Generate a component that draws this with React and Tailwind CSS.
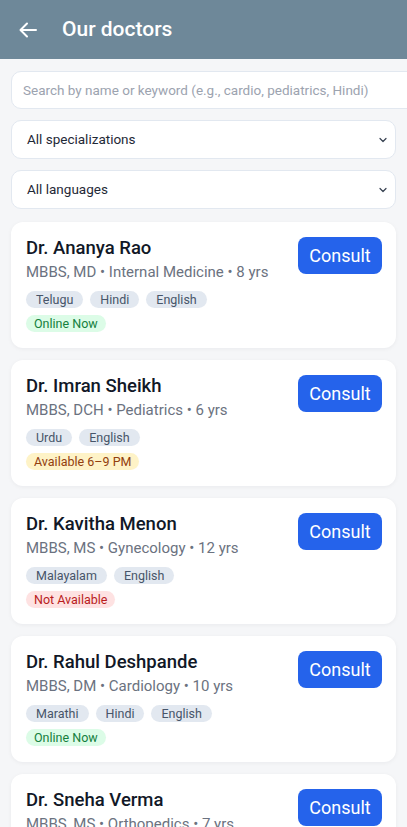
import React from 'react';

const doctors = [
  { name: 'Dr. Ananya Rao', info: 'MBBS, MD • Internal Medicine • 8 yrs', langs: ['Telugu', 'Hindi', 'English'], status: 'online' },
  { name: 'Dr. Imran Sheikh', info: 'MBBS, DCH • Pediatrics • 6 yrs', langs: ['Urdu', 'English'], status: 'evening' },
  { name: 'Dr. Kavitha Menon', info: 'MBBS, MS • Gynecology • 12 yrs', langs: ['Malayalam', 'English'], status: 'off' },
  { name: 'Dr. Rahul Deshpande', info: 'MBBS, DM • Cardiology • 10 yrs', langs: ['Marathi', 'Hindi', 'English'], status: 'online' },
  { name: 'Dr. Sneha Verma', info: 'MBBS, MS • Orthopedics • 7 yrs', langs: ['Hindi', 'English'], status: 'online' },
];

const statusStyles = {
  online: { label: 'Online Now', cls: 'bg-[#dcfce7] text-[#15803d]' },
  evening: { label: 'Available 6–9 PM', cls: 'bg-[#fef3c7] text-[#92400e]' },
  off: { label: 'Not Available', cls: 'bg-[#fee2e2] text-[#b91c1c]' },
};

function Chevron() {
  return (
    <svg width="10" height="10" viewBox="0 0 10 10" fill="none" stroke="#374151" strokeWidth="1.2" strokeLinecap="round" strokeLinejoin="round">
      <path d="M2 3.5 L5 6.5 L8 3.5" />
    </svg>
  );
}

function FakeSelect({ label }) {
  return (
    <div className="h-[39px] bg-white border border-[#e2e8f0] rounded-[10px] flex items-center justify-between pl-[15px] pr-[7px]">
      <span className="text-[13.5px] text-[#1f2937]">{label}</span>
      <Chevron />
    </div>
  );
}

function DoctorCard({ doc }) {
  const st = statusStyles[doc.status];
  return (
    <div className="bg-white rounded-[12px] shadow-[0_1px_4px_rgba(15,23,42,0.05)] pt-[14px] pb-[16px] pl-[15px] pr-[14px] flex justify-between">
      <div className="flex flex-col items-start">
        <div className="text-[18.5px] leading-6 text-[#111827] font-medium">{doc.name}</div>
        <div className="text-[15px] leading-5 text-[#6b7280] mt-[2px]">{doc.info}</div>
        <div className="flex gap-[7px] mt-[9px]">
          {doc.langs.map((l) => (
            <span key={l} className="bg-[#e2e8f0] text-[#475569] text-[12.5px] leading-[17px] rounded-full px-[10px]">{l}</span>
          ))}
        </div>
        <span className={`mt-[7px] text-[12.5px] leading-[17px] rounded-full px-[8px] ${st.cls}`}>{st.label}</span>
      </div>
      <button className="mt-[1px] h-[37px] w-[84px] bg-[#2563eb] text-white text-[18px] rounded-[8px] shrink-0">Consult</button>
    </div>
  );
}

export default function App() {
  return (
    <div className="h-screen bg-[#f5f6f8] font-['Roboto',sans-serif] overflow-hidden">
      <div className="h-[59px] bg-[#6e8899] flex items-center pl-[19px]">
        <svg width="18" height="16" viewBox="0 0 18 16" fill="none" stroke="white" strokeWidth="2" strokeLinecap="round" strokeLinejoin="round">
          <path d="M17 8 H2 M8 1.5 L1.5 8 L8 14.5" />
        </svg>
        <h1 className="ml-[25px] text-[21px] font-medium text-white">Our doctors</h1>
      </div>

      <div className="px-[11px] pt-[12px]">
        <input
          type="text"
          placeholder="Search by name or keyword (e.g., cardio, pediatrics, Hindi)"
          className="w-[calc(100%+22px)] h-[38px] bg-white border border-[#e2e8f0] rounded-[10px] px-[11px] text-[13.5px] placeholder:text-[#9ca3af] outline-none"
        />
        <div className="mt-[11px] flex flex-col gap-[11px]">
          <FakeSelect label="All specializations" />
          <FakeSelect label="All languages" />
        </div>

        <div className="mt-[13px] flex flex-col gap-[12px] pb-4">
          {doctors.map((d) => (
            <DoctorCard key={d.name} doc={d} />
          ))}
        </div>
      </div>
    </div>
  );
}
